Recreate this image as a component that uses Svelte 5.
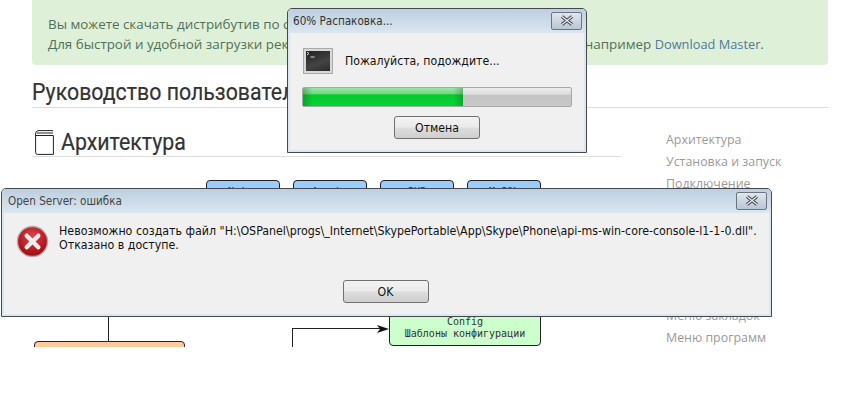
<script>
  const menu = ['Архитектура', 'Установка и запуск', 'Подключение', '', '', '', '', '', 'Меню закладок', 'Меню программ'];
  const blue = [206, 293, 380, 467];
  const blueText = ['Nginx', 'Apache', 'PHP', 'MySQL'];
</script>

<main>
  <div class="alert">
    <p>Вы можете скачать дистрибутив по ссылкам на этой странице.</p>
    <p>Для быстрой и удобной загрузки рекомендуем использовать менеджер загрузок, например <span class="link">Download Master</span>.</p>
  </div>

  <h1><span>Руководство пользователя</span></h1>

  <div class="columns">
    <section>
      <h2>
        <svg width="19" height="25" viewBox="0 0 19 25" fill="none" stroke="#222" stroke-width="1">
          <path d="M3 .6h15M2 3h16M.6 5.500h17.800V24.400H2.600q-2 0-2-2V4q0-3 2.400-3.400" />
        </svg>
        <span>Архитектура</span>
      </h2>
      <div class="diagram">
        {#each blue as x, i}
          <div class="node blue" style="left: {x - 32}px">{blueText[i]}</div>
        {/each}
        <div class="line v1"></div>
        <div class="node orange"></div>
        <div class="line v2"></div>
        <div class="line h2"></div>
        <svg class="arrow" width="12" height="8" viewBox="0 0 12 8"><path d="M0 0l12 4-12 4 3-4z" fill="#111" /></svg>
        <div class="node green">Config<br />Шаблоны конфигурации</div>
      </div>
    </section>
    <ul>
      {#each menu as item}
        <li>{item}</li>
      {/each}
    </ul>
  </div>

  <div class="win progress-win">
    <div class="titlebar">
      <span>60% Распаковка...</span>
      <button class="close" aria-label="Закрыть">
        <svg width="16" height="11" viewBox="0 0 16 11" fill="none">
          <path d="M3 1.500l10 8M13 1.500l-10 8" stroke="#3c4048" stroke-width="3.400" />
          <path d="M3 1.500l10 8M13 1.500l-10 8" stroke="#e8edf3" stroke-width="1.400" />
        </svg>
      </button>
    </div>
    <div class="client">
      <div class="wait">
        <div class="console"><div class="screen"><svg width="10" height="8" viewBox="0 0 10 8" fill="none" stroke="#ddd"><path d="M1 1l2 1.500-2 1.500M4.500 6h4" /></svg></div></div>
        <span>Пожалуйста, подождите...</span>
      </div>
      <div class="bar"><div class="fill" style="width: 59.700%"></div></div>
      <button class="btn">Отмена</button>
    </div>
  </div>

  <div class="win error-win">
    <div class="titlebar">
      <span class="dim">Open Server: ошибка</span>
      <button class="close" aria-label="Закрыть">
        <svg width="16" height="11" viewBox="0 0 16 11" fill="none">
          <path d="M3 1.500l10 8M13 1.500l-10 8" stroke="#3c4048" stroke-width="3.400" />
          <path d="M3 1.500l10 8M13 1.500l-10 8" stroke="#e8edf3" stroke-width="1.400" />
        </svg>
      </button>
    </div>
    <div class="client">
      <div class="message">
        <svg width="33" height="33" viewBox="0 0 34 34">
          <defs>
            <radialGradient id="red" cx="50%" cy="35%" r="70%">
              <stop offset="0" stop-color="#d8474f" />
              <stop offset="0.7" stop-color="#b4141c" />
              <stop offset="1" stop-color="#8c0c12" />
            </radialGradient>
          </defs>
          <circle cx="17" cy="17" r="15.500" fill="url(#red)" stroke="#b8a8a8" stroke-width="1.400" />
          <path d="M11 11l12 12M23 11l-12 12" stroke="#eee" stroke-width="4.500" stroke-linecap="round" />
        </svg>
        <p>Невозможно создать файл "H:\OSPanel\progs\_Internet\SkypePortable\App\Skype\Phone\api-ms-win-core-console-l1-1-0.dll".<br />Отказано в доступе.</p>
      </div>
      <button class="btn">OK</button>
    </div>
  </div>
</main>

<style>
  :global(body) {
    margin: 0;
    background: #fff;
  }

  main {
    position: relative;
    width: 859px;
    height: 411px;
    overflow: hidden;
    padding: 0 31px 0 32px;
    box-sizing: border-box;
    font-family: "Open Sans", sans-serif;
  }

  .alert {
    height: 65px;
    box-sizing: border-box;
    padding: 14px 16px 0;
    background: #dff0d8;
    border-radius: 0 0 4px 4px;
    color: #50705a;
    font-size: 13.400px;
    line-height: 20px;
  }

  .alert p {
    margin: 0;
    white-space: nowrap;
  }

  .link {
    color: #4f7a98;
    font-size: 12.800px;
  }

  h1 {
    margin: 13px 0 0;
    height: 29px;
    border-bottom: 1px solid #ddd;
    font: 400 24.500px/28px Roboto, sans-serif;
    color: #333;
    white-space: nowrap;
  }

  h1 span,
  h2 span {
    display: inline-block;
    transform: scaleX(0.87);
    transform-origin: left;
    -webkit-text-stroke: 0.2px #333;
  }

  .columns {
    display: flex;
    gap: 45px;
  }

  section {
    width: 589px;
    flex: none;
  }

  h2 {
    display: flex;
    align-items: center;
    gap: 7px;
    margin: 20px 0 0;
    padding-left: 3px;
    height: 28px;
    border-bottom: 1px solid #ddd;
    font: 400 24.500px/28px Roboto, sans-serif;
    color: #333;
  }

  .diagram {
    position: relative;
    height: 190px;
    overflow: hidden;
    font: 10px/12px "DejaVu Sans Mono", monospace;
    color: #333;
  }

  .node {
    position: absolute;
    box-sizing: border-box;
    border: 1px solid #222;
    border-radius: 4px;
    text-align: center;
  }

  .blue {
    top: 23px;
    width: 74px;
    height: 40px;
    background: #99ccff;
    padding-top: 5px;
  }

  .orange {
    left: 2px;
    top: 184px;
    width: 151px;
    height: 30px;
    background: #ffcc99;
  }

  .green {
    left: 357px;
    top: 130px;
    width: 152px;
    height: 59px;
    background: #ccffcc;
    padding-top: 28px;
  }

  .line {
    position: absolute;
    background: #222;
  }

  .v1 {
    left: 76px;
    top: 150px;
    width: 1px;
    height: 34px;
  }

  .v2 {
    left: 260px;
    top: 171px;
    width: 1px;
    height: 20px;
  }

  .h2 {
    left: 260px;
    top: 171px;
    width: 90px;
    height: 1px;
  }

  .arrow {
    position: absolute;
    left: 345px;
    top: 168px;
  }

  ul {
    list-style: none;
    margin: 21px 0 0;
    padding: 0;
    font-size: 12.400px;
    line-height: 22px;
    color: #9a9a9a;
    white-space: nowrap;
  }

  li {
    height: 22px;
  }

  .win {
    position: absolute;
    box-sizing: border-box;
    display: flex;
    flex-direction: column;
    border: 1px solid #45494e;
    border-radius: 5px 5px 0 0;
    background: #dbe6f0;
    font-family: "DejaVu Sans Condensed", "DejaVu Sans", sans-serif;
    color: #111;
  }

  .progress-win {
    left: 287px;
    top: 8px;
    width: 300px;
    height: 145px;
  }

  .error-win {
    left: 1px;
    top: 188px;
    width: 771px;
    height: 129px;
  }

  .titlebar {
    flex: none;
    height: 24px;
    display: flex;
    align-items: center;
    justify-content: space-between;
    padding: 0 4px 0 5px;
    background: linear-gradient(#bccfe0, #dbe6f0);
    border-radius: 4px 4px 0 0;
    font-size: 11.600px;
    color: #333;
  }

  .error-win .titlebar {
    padding-left: 6px;
  }

  .dim {
    color: #444;
  }

  .close {
    width: 31px;
    height: 18px;
    padding: 0;
    margin-top: -1px;
    display: flex;
    align-items: center;
    justify-content: center;
    border: 1px solid #6c7480;
    border-radius: 2px;
    background: linear-gradient(#dfe6ee, #b9c6d6);
  }

  .client {
    flex: 1;
    margin: 0 2px 2px 2px;
    display: flex;
    flex-direction: column;
    align-items: center;
    background: #f0f0f0;
  }

  .progress-win .client {
    align-items: stretch;
    padding: 15px 12px 0;
  }

  .wait {
    display: flex;
    align-items: center;
    gap: 12px;
    margin-left: 1px;
    font-size: 12.200px;
  }

  .console {
    width: 30px;
    height: 26px;
    box-sizing: border-box;
    padding: 2px;
    background: #d8d8d8;
    border: 1px solid #aaa;
  }

  .screen {
    height: 100%;
    background: linear-gradient(160deg, #222, #444 60%, #2a2a2a);
    line-height: 0;
  }

  .bar {
    height: 18px;
    margin-top: 13px;
    border: 1px solid #a8a8a8;
    border-radius: 2px;
    background: linear-gradient(#ececec 0, #dcdcdc 35%, #c4c4c4 40%, #c8c8c8 100%);
  }

  .fill {
    height: 100%;
    background:
      linear-gradient(90deg, rgba(0, 90, 30, 0.35), transparent 6%, transparent 94%, rgba(0, 90, 30, 0.3)),
      linear-gradient(#9fe5a8 0, #6fd880 32%, #08c92e 38%, #05d235 90%);
  }

  .btn {
    width: 86px;
    height: 23px;
    padding: 0;
    border: 1px solid #707070;
    border-radius: 3px;
    background: linear-gradient(#f2f2f2 0, #ebebeb 48%, #dddddd 52%, #cfcfcf 100%);
    font: 12.200px "DejaVu Sans Condensed", "DejaVu Sans", sans-serif;
    color: #111;
  }

  .progress-win .btn {
    align-self: center;
    margin-top: 9px;
  }

  .error-win .btn {
    margin-right: 2px;
  }

  .message {
    align-self: stretch;
    display: flex;
    gap: 10px;
    padding: 12px 0 0 12px;
    box-sizing: border-box;
    height: 67px;
  }

  .message p {
    margin: -1px 0 0;
    font-size: 12.300px;
    line-height: 14px;
    white-space: nowrap;
  }
</style>
